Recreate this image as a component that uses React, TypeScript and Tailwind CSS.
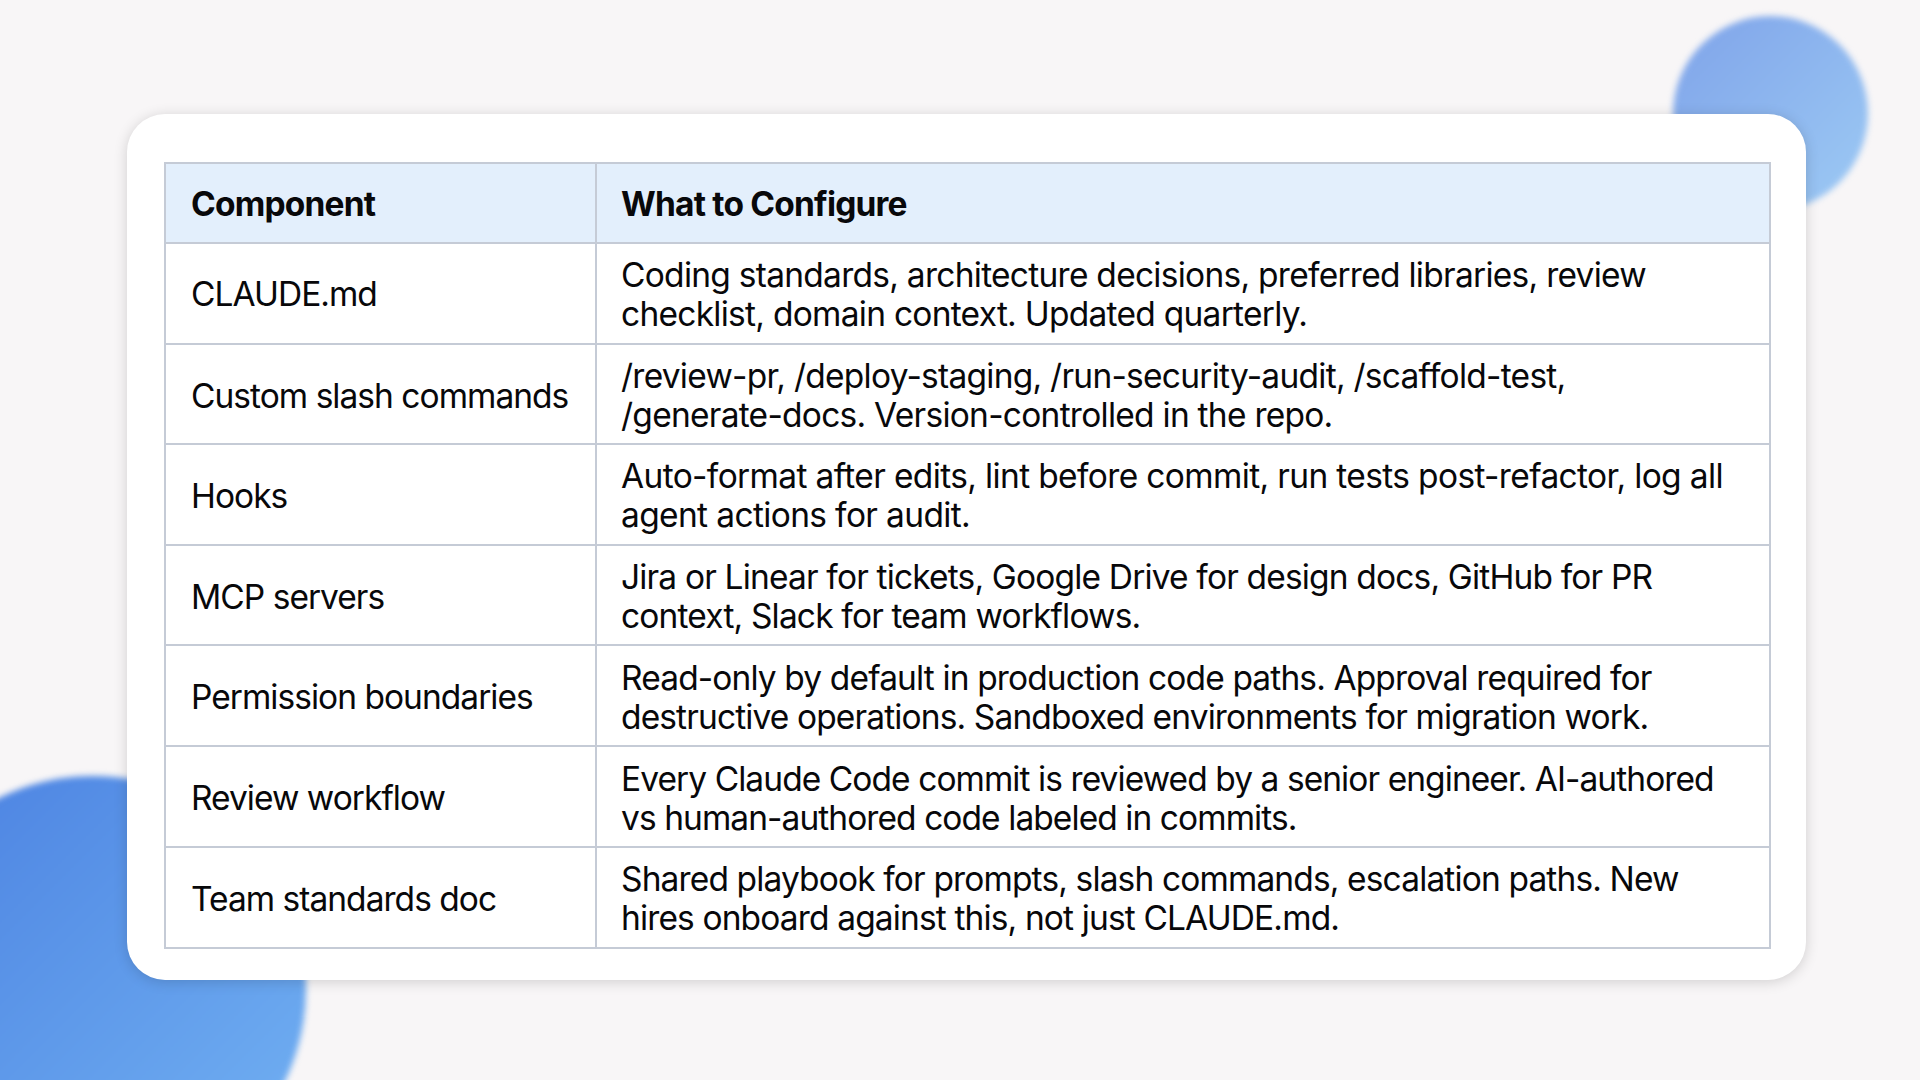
const rows: [string, string, string, string, string, string][] = [
  ["CLAUDE.md", "Coding standards, architecture decisions, preferred libraries, review", "checklist, domain context. Updated quarterly.", "h-[101px]", "tracking-[-0.73px]", "pt-[2px]"],
  ["Custom slash commands", "/review-pr, /deploy-staging, /run-security-audit, /scaffold-test,", "/generate-docs. Version-controlled in the repo.", "h-[100px]", "tracking-[-0.74px]", "pt-[4px]"],
  ["Hooks", "Auto-format after edits, lint before commit, run tests post-refactor, log all", "agent actions for audit.", "h-[101px]", "tracking-[-0.64px]", "pt-[3px]"],
  ["MCP servers", "Jira or Linear for tickets, Google Drive for design docs, GitHub for PR", "context, Slack for team workflows.", "h-[100px]", "tracking-[-0.83px]", "pt-[4px]"],
  ["Permission boundaries", "Read-only by default in production code paths. Approval required for", "destructive operations. Sandboxed environments for migration work.", "h-[101px]", "tracking-[-0.87px]", "pt-[4px]"],
  ["Review workflow", "Every Claude Code commit is reviewed by a senior engineer. AI-authored", "vs human-authored code labeled in commits.", "h-[101px]", "tracking-[-0.93px]", "pt-[4px]"],
  ["Team standards doc", "Shared playbook for prompts, slash commands, escalation paths. New", "hires onboard against this, not just CLAUDE.md.", "h-[101px]", "tracking-[-0.86px]", "pt-[3px]"],
];

export default function App() {
  return (
    <div className="relative h-[1080px] w-[1920px] overflow-hidden bg-[#f8f6f7] pl-[127px] pt-[114px] font-['Inter','Liberation_Sans',sans-serif] text-[#08080a]">
      <div className="absolute left-[1673px] top-[16px] h-[195px] w-[195px] rounded-full bg-gradient-to-br from-[#7fa3e9] to-[#9dcaf4] blur-[3px]" />
      <div className="absolute left-[-120px] top-[776px] h-[426px] w-[426px] rounded-full bg-gradient-to-br from-[#4a7fe0] to-[#74b3f3] blur-[3px]" />
      <div className="relative h-[866px] w-[1679px] rounded-[38px] bg-white pl-[37px] pt-[48px] shadow-[0_2px_14px_rgba(0,0,0,0.16)]">
        <table className="w-[1607px] table-fixed border-collapse border-2 border-[#c5cbd6]">
          <colgroup>
            <col className="w-[431px]" />
            <col />
          </colgroup>
          <thead>
            <tr className="h-[80px] bg-[#e3effc] text-left text-[33.5px] font-bold tracking-[-0.8px]">
              <th className="border-2 border-[#c5cbd6] pl-[25px] pt-[2px] font-bold">Component</th>
              <th className="border-2 border-[#c5cbd6] pl-[24px] pt-[2px] font-bold">What to Configure</th>
            </tr>
          </thead>
          <tbody>
            {rows.map(([name, a, b, height, tracking, pad]) => (
              <tr key={name} className={`${height} text-[33.5px] leading-[39px]`}>
                <td className={`border-2 border-[#c5cbd6] pl-[25px] tracking-[-0.97px] ${pad}`}>{name}</td>
                <td className={`border-2 border-[#c5cbd6] pl-[24px] ${pad} ${tracking}`}>
                  {a}
                  <br />
                  {b}
                </td>
              </tr>
            ))}
          </tbody>
        </table>
      </div>
    </div>
  );
}
